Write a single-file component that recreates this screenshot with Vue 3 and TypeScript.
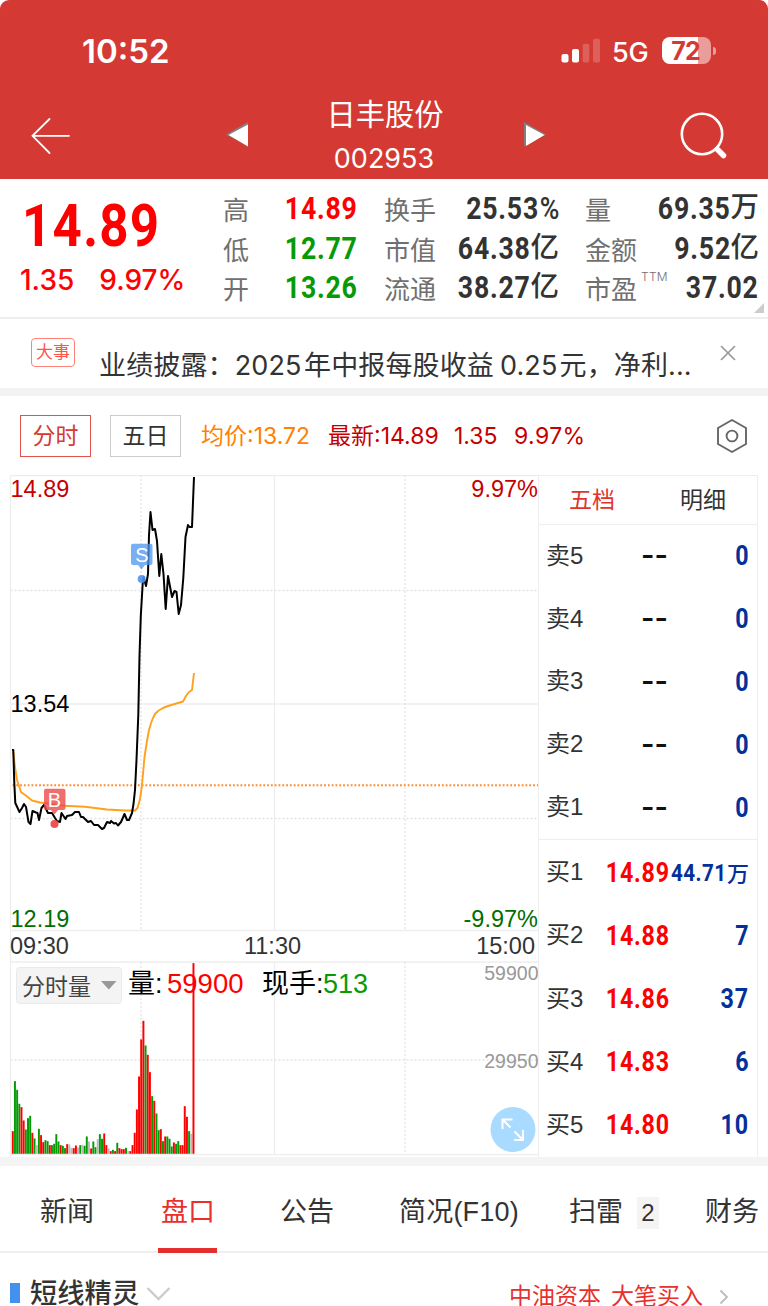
<script setup lang="ts">
interface Metric { label: string; value: string; unit?: string; pct?: boolean; tone?: 'rise' | 'fall'; sup?: string }
interface Level { label: string; price: string; volume: string; unit?: string }
interface Bar { x: number; y: number; height: number; fill: string }

const metricRows: Metric[][] = [
  [
    { label: '高', value: '14.89', tone: 'rise' },
    { label: '换手', value: '25.53', pct: true },
    { label: '量', value: '69.35', unit: '万' },
  ],
  [
    { label: '低', value: '12.77', tone: 'fall' },
    { label: '市值', value: '64.38', unit: '亿' },
    { label: '金额', value: '9.52', unit: '亿' },
  ],
  [
    { label: '开', value: '13.26', tone: 'fall' },
    { label: '流通', value: '38.27', unit: '亿' },
    { label: '市盈', value: '37.02', sup: 'TTM' },
  ],
]

const asks: Level[] = ['5', '4', '3', '2', '1'].map((n) => ({ label: '卖' + n, price: '--', volume: '0' }))
const bids: Level[] = [
  { label: '买1', price: '14.89', volume: '44.71', unit: '万' },
  { label: '买2', price: '14.88', volume: '7' },
  { label: '买3', price: '14.86', volume: '37' },
  { label: '买4', price: '14.83', volume: '6' },
  { label: '买5', price: '14.80', volume: '10' },
]

// Chart coordinates start at the top of the price pane.
const priceLine =
  '12,275 13.3,275 13.6,285 14.3,308 15.3,328 19.5,337 22,333 24,329 26,332 28.5,347 30.5,349 32.5,336 36,337.5 37.5,338 39,345 41.5,333 44,330 48,338 52,338 55,343 57,346 60,347 61.5,338 65.5,344 67,341 72,340 75,337 79,337 81,342 83,342 88,347 91,346 94,350 98,350 102,354 104,353 107,347 110,348 111,346 114,348.5 116,348 118,350.5 121,347 124.5,339 127,345 129,345 132,338 133.5,329 135,315 136.5,285 138.3,240 139.5,181 140.8,141 142.6,110 143.5,102 146,111 148,99 149,60 150.5,37 152.5,55 155,54 157,66 159.3,101 161.3,79 163.5,99 165.7,134 168,101 172,122 174.5,116 176.5,117 178.7,139 181,130 183.3,103 185.5,62 188,50 189.5,52 192,52 194,2'
const averageLine =
  '13.3,277 15,292 17,305 21,317 26.5,321 32,325.5 40,327.5 55,329.5 65,330.7 85,331.7 95,333 107,334.5 125,335.5 135,335.5 137.5,333 140,324 142,310 144.5,282 147,266 149,255 151,248 153,243 155,239 158,236 163,233 168,231 178,228 183,226.5 186,221 189,217 192,215 194,198'

const volumes =
  '68r 218g 192g 150g 140r 100r 73g 107g 114g 63r 46g 26n 75g 56r 35r 41g 38g 26r 26g 30g 59g 37g 26r 24g 17g 29r 28n 18n 17r 25r 19n 26g 27n 24g 52g 37n 16r 37g 20g 44n 59g 45g 61r 26r 16n 8r 12g 8r 33g 17r 14r 14r 18g 8n 8r 26r 63r 133r 232r 343r 399r 325g 297r 245r 173g 159r 121g 71g 74r 38g 52r 52g 45g 22g 34r 30g 38g 26r 26r 143r 111r 68g 60n 572r'
const tones: Record<string, string> = { r: '#ff0000', g: '#069a06', n: '#bbbbbb' }
const bars: Bar[] = volumes.split(' ').map((item, i) => {
  const height = parseInt(item, 10) / 3
  return { x: 11.8 + i * 2.177, y: 678.8 - height, height, fill: tones[item.slice(-1)] }
})

const tabs = [
  { label: '新闻', cls: 't1' },
  { label: '盘口', cls: 't2 on' },
  { label: '公告', cls: 't3' },
  { label: '简况(F10)', cls: 't4' },
  { label: '扫雷', cls: 't5', count: '2' },
  { label: '财务', cls: 't6' },
]
</script>

<template>
  <div class="screen">
    <header class="head">
      <div class="status">
        <span class="clock">10:52</span>
        <svg class="signal" width="40" height="26" viewBox="0 0 40 26">
          <g fill="#fff">
            <rect x="0.5" y="16" width="7" height="8.5" rx="2" />
            <rect x="11" y="11" width="7" height="13.5" rx="2" />
            <rect x="21.7" y="5.7" width="6.6" height="18.8" rx="2" opacity=".2" />
            <rect x="32" y="0.8" width="7" height="23.7" rx="2" opacity=".2" />
          </g>
        </svg>
        <span class="net">5G</span>
        <span class="battery"><span class="level">72</span></span>
        <span class="nub"></span>
      </div>
      <div class="titlebar">
        <svg class="back" width="42" height="38" viewBox="0 0 42 38" fill="none" stroke="#fff" stroke-width="1.8" stroke-linecap="round">
          <path d="M19.500 2 2.500 18.800 19.500 36M2.500 18.800H39" />
        </svg>
        <svg class="prev" width="24" height="26" viewBox="0 0 24 26">
          <path d="M0 12.500 22 0V24Z" fill="#808080" /><path d="M2.500 13 22 2.500V24.500Z" fill="#fff" />
        </svg>
        <div class="names"><span class="stock">日丰股份</span><span class="code">002953</span></div>
        <svg class="next" width="24" height="26" viewBox="0 0 24 26">
          <path d="M1 0 23 12.500 1 24.500Z" fill="#808080" /><path d="M3 3 21.500 13 3 24Z" fill="#fff" />
        </svg>
        <svg class="search" width="48" height="48" viewBox="0 0 48 48" fill="none" stroke="#fff">
          <circle cx="22" cy="22" r="20.200" stroke-width="2.600" />
          <path d="m35.500 35.500 3 3" stroke-width="4" /><path d="m38 38 5.500 5.500" stroke-width="5.500" stroke-linecap="round" />
        </svg>
      </div>
    </header>

    <section class="quote">
      <div class="now">
        <div class="last">14.89</div>
        <div class="change"><span>1.35</span><span>9.97%</span></div>
      </div>
      <div class="metrics">
        <div v-for="(row, r) in metricRows" :key="r" class="metric-row">
          <div v-for="m in row" :key="m.label" class="metric">
            <span class="mlabel">{{ m.label }}<sup v-if="m.sup">{{ m.sup }}</sup></span>
            <span class="mvalue" :class="m.tone"><span class="num">{{ m.value }}<i v-if="m.pct">%</i></span><i v-if="m.unit" class="unit">{{ m.unit }}</i></span>
          </div>
        </div>
      </div>
      <span class="corner"></span>
    </section>

    <section class="event">
      <span class="tag">大事</span>
      <p>业绩披露：<b class="year">2025</b>年中报每股收益<b class="eps">0.25</b>元，净利<b>...</b></p>
      <svg width="18" height="18" viewBox="0 0 18 18" stroke="#999" stroke-width="1.700"><path d="M2 2 16 16M16 2 2 16" /></svg>
    </section>

    <nav class="modes">
      <span class="mode on">分时</span>
      <span class="mode">五日</span>
      <span class="avg">均价<b>:13.72</b></span>
      <span class="new">最新<b>:14.89</b></span>
      <span class="diff">1.35</span>
      <span class="rate">9.97%</span>
      <svg width="34" height="36" viewBox="0 0 34 36" fill="none" stroke="#666" stroke-width="1.900">
        <path d="M17 2 31 10V26L17 34 3 26V10Z" stroke-linejoin="round" /><circle cx="17" cy="18" r="5.400" />
      </svg>
    </nav>

    <main class="market">
      <svg class="chart" width="538" height="682" viewBox="0 0 538 682">
        <g fill="none" stroke="#eeeeee" stroke-width="1.3">
          <path d="M10.5 682V.7H538M10.5 229H538M10.5 455.5H538M10.5 487H538M10.5 679.7H538M274.5 0V455.5M274.5 487V680" />
          <path d="M10.5 115.5H538M10.5 343.5H538M10.5 585H538M141 0V455.5M405 0V455.5M141 487V680M405 487V680" stroke="#e4e4e4" stroke-dasharray="2 2" />
        </g>
        <path d="M12.5 310.2H538" stroke="#ff8a2b" stroke-width="2" stroke-dasharray="1.8 2" />
        <polyline :points="averageLine" fill="none" stroke="#ffa11c" stroke-width="1.9" stroke-linejoin="round" />
        <polyline :points="priceLine" fill="none" stroke="#000" stroke-width="2" stroke-linejoin="round" />
        <g fill="#4c95f0">
          <circle cx="141.7" cy="104" r="4" opacity=".9" />
          <path d="M133 68.7h17.5a2 2 0 0 1 2 2V88a2 2 0 0 1-2 2H145l-3.5 4.5L138 90h-5a2 2 0 0 1-2-2V70.7a2 2 0 0 1 2-2Z" opacity=".75" />
        </g>
        <g fill="#ec4a4a">
          <circle cx="54.5" cy="349" r="4" opacity=".95" />
          <path d="M46 313.7h17.5a2 2 0 0 1 2 2V333a2 2 0 0 1-2 2H58l-3.5 4.5L51 335h-5a2 2 0 0 1-2-2V315.700a2 2 0 0 1 2-2Z" opacity=".8" />
        </g>
        <g fill="#fff" font-size="20" text-anchor="middle"><text x="141.8" y="87">S</text><text x="54.5" y="332">B</text></g>
        <g font-size="23.5">
          <text x="10.5" y="22" fill="#c40000">14.89</text>
          <text x="538" y="22" fill="#c40000" text-anchor="end">9.97%</text>
          <text x="10.5" y="237">13.54</text>
          <text x="10.5" y="451.5" fill="#006e00">12.19</text>
          <text x="538" y="451.5" fill="#006e00" text-anchor="end">-9.97%</text>
          <g fill="#333"><text x="10" y="479">09:30</text><text x="272.5" y="479" text-anchor="middle">11:30</text><text x="535" y="479" text-anchor="end">15:00</text></g>
        </g>
        <g font-size="19.5" fill="#999" text-anchor="end"><text x="538.5" y="505">59900</text><text x="538.5" y="593">29950</text></g>
        <rect v-for="(b, i) in bars" :key="i" :x="b.x" :y="b.y" :width="1.95" :height="b.height" :fill="b.fill" />
        <rect x="16.5" y="492.5" width="105" height="36" rx="3" fill="#f4f4f4" stroke="#eaeaea" />
        <text x="22" y="520" font-size="23" fill="#444">分时量</text>
        <path d="M101 506h15.500l-7.700 8.500Z" fill="#999" />
        <g font-size="27">
          <text x="128" y="518">量:</text><text x="167" y="518" font-size="27.500" fill="#ff0000">59900</text>
          <text x="262" y="518">现手:</text><text x="323" y="518" fill="#069a06">513</text>
        </g>
        <circle cx="513" cy="654.500" r="22.500" fill="#a8dbff" />
        <path d="M502.500 654V644.500H512.500M503 645 510.500 652.500M514.500 656.500 522.500 664.500M514 665H523V655" fill="none" stroke="#fff" stroke-width="2" />
      </svg>
      <aside class="book">
        <div class="book-tabs"><span class="on">五档</span><span>明细</span></div>
        <div class="side asks">
          <div v-for="l in asks" :key="l.label" class="level-row"><span>{{ l.label }}</span><em>{{ l.price }}</em><strong><u>{{ l.volume }}</u></strong></div>
        </div>
        <div class="side bids">
          <div v-for="l in bids" :key="l.label" class="level-row">
            <span>{{ l.label }}</span><b>{{ l.price }}</b><strong :class="{ small: l.unit }"><u>{{ l.volume }}</u><i v-if="l.unit">{{ l.unit }}</i></strong>
          </div>
        </div>
      </aside>
    </main>

    <nav class="tabs">
      <span v-for="t in tabs" :key="t.label" :class="t.cls">{{ t.label }}<small v-if="t.count">{{ t.count }}</small></span>
    </nav>

    <footer class="alerts">
      <span class="mark"></span>
      <h2>短线精灵</h2>
      <svg class="expand" width="26" height="16" viewBox="0 0 26 16" fill="none" stroke="#ccc" stroke-width="2.400"><path d="M1.500 2 12.500 13 23.500 2" /></svg>
      <span class="tip">中油资本</span><span class="tip second">大笔买入</span>
      <svg class="more" width="10" height="16" viewBox="0 0 10 16" fill="none" stroke="#bbb" stroke-width="1.800"><path d="M1.500 1.500 8 8 1.500 14.500" /></svg>
    </footer>
  </div>
</template>

<style>
body { margin: 0; background: #fff; }
</style>

<style scoped>
.screen { width: 768px; height: 1306px; overflow: hidden; background: #fff; font-family: "Liberation Sans", "Noto Sans CJK SC", sans-serif; color: #333; }
.screen * { box-sizing: border-box; }
i, em { font-style: normal; }
svg { display: block; flex: none; }
span, p, h2, strong { white-space: nowrap; }

.head { height: 179px; background: #d43a33; border-radius: 9px 9px 0 0; color: #fff; font-family: Inter, "Noto Sans CJK SC", sans-serif; }
.status { height: 80px; padding: 38px 0 0 82px; display: flex; }
.clock { width: 479px; font-size: 33px; line-height: 27px; font-weight: 600; }
.net { width: 61px; padding-left: 11px; font-size: 27px; line-height: 29px; font-weight: 500; letter-spacing: -.3px; }
.battery { width: 49px; height: 27px; margin-top: -1px; border-radius: 8px; background: linear-gradient(90deg, #fff 36px, rgba(255, 255, 255, .5) 36px); }
.level { display: block; padding-right: 2px; text-align: center; font-size: 25px; line-height: 29px; font-weight: 700; color: #d43a33; letter-spacing: -1px; }
.nub { width: 3px; height: 8px; margin: 9px 0 0 2px; border-radius: 0 4px 4px 0; background: rgba(255, 255, 255, .5); }
.titlebar { display: flex; height: 99px; }
.back { margin: 37px 0 0 30px; }
.prev { margin: 42px 0 0 154px; }
.names { width: 270px; display: flex; flex-direction: column; align-items: center; padding: 14px 0 0; }
.stock { font-size: 29.300px; line-height: 42px; }
.code { padding-right: 2px; font-size: 27px; line-height: 46px; font-weight: 400; }
.next { margin: 42px 0 0 3px; }
.search { margin: 32px 0 0 133px; }

.quote { position: relative; display: flex; height: 140px; border-bottom: 2px solid #eee; }
.now { width: 224px; color: #f00; }
.last { padding: 17px 0 0; margin-left: 22px; font: 700 59px/60px Roboto, sans-serif; letter-spacing: 1.500px; transform: scaleX(.865); transform-origin: 0 0; }
.change { display: flex; gap: 25px; padding-left: 20px; font: 500 28px/48px Inter, sans-serif; }
.metrics { padding-top: 9px; }
.metric-row { display: grid; grid-template-columns: 135px 175px 174px; column-gap: 26px; height: 39.500px; margin-left: -1px; }
.metric { display: flex; justify-content: space-between; }
.mlabel { font-size: 26px; line-height: 47px; color: #707070; }
.mlabel sup { display: inline-block; margin-left: 4px; font: 300 12px/12px Inter, sans-serif; letter-spacing: .3px; vertical-align: 18px; }
.mvalue { display: flex; justify-content: flex-end; min-width: 0; }
.num { font: 700 31px/41px Roboto, sans-serif; letter-spacing: .9px; transform: scaleX(.86); transform-origin: 100% 0; }
.num i { margin-left: 1px; font-weight: 500; letter-spacing: 0; }
.unit { font-size: 28.500px; font-weight: 500; line-height: 39px; }
.rise { color: #f00; }
.fall { color: #069a06; }
.corner { position: absolute; right: 4px; bottom: 4px; border-left: 10px solid transparent; border-bottom: 10px solid #ccc; }

.event { display: flex; height: 69px; }
.tag { width: 44px; height: 29px; margin: 19px 0 0 31px; border: 1.500px solid #ff8279; border-radius: 4px; font-size: 17px; line-height: 27px; text-align: center; color: #ff5348; }
.event p { width: 620px; margin: 24px 0 0 24px; font-size: 27px; line-height: 46px; font-family: Inter, "Noto Sans CJK SC", sans-serif; letter-spacing: .13px; }
.event b { font-weight: 400; }
.event .year { margin-right: 2.500px; }
.eps { margin: 0 2px 0 6px; }
.event svg { margin-top: 25px; }

.modes { display: flex; height: 87px; padding: 19px 0 0 20px; border-top: 8px solid #f3f3f3; font-size: 23px; line-height: 42px; font-family: Inter, "Noto Sans CJK SC", sans-serif; color: #c40000; }
.modes b { font-weight: 400; }
.mode { width: 71px; height: 42px; margin-right: 19px; border: 1px solid #ccc; line-height: 41px; text-align: center; color: #333; }
.mode.on { border-color: #e0524b; color: #d43a33; }
.avg { width: 127px; margin-left: 1px; color: #ff8100; }
.new { width: 126px; }
.diff { width: 60px; }
.rate { width: 201px; letter-spacing: .4px; }
.modes svg { margin-top: 3px; }

.market { display: flex; height: 682px; }
.book { width: 220px; border: 1px solid #eee; border-bottom: 0; }
.book-tabs { display: flex; height: 49px; padding-left: 30px; border-bottom: 1px solid #eee; font-size: 23px; line-height: 49px; }
.book-tabs span { flex: none; width: 111px; }
.book-tabs .on { color: #e0352d; }
.side { display: flex; flex-direction: column; }
.asks { height: 315px; border-bottom: 1px solid #eee; }
.bids { height: 317px; padding-top: 1px; }
.level-row { flex: 1; display: grid; grid-template-columns: 59px 63px 81px; align-items: center; padding-left: 7px; }
.level-row span { font-size: 24px; line-height: 30px; margin-top: -1px; }
.level-row em { font: 600 29px/30px Inter, sans-serif; color: #111; padding-left: 36px; margin-top: -2px; }
.level-row b { padding-left: 1px; font: 700 27px/32px Roboto, sans-serif; letter-spacing: .9px; color: #f00; transform: scaleX(.86); transform-origin: 0 0; }
.level-row strong { justify-self: end; display: flex; justify-content: flex-end; font: 700 27px/32px Roboto, sans-serif; color: #03309a; }
.level-row u { text-decoration: none; letter-spacing: .9px; transform: scaleX(.86); transform-origin: 100% 0; }
.level-row .small { font-size: 24px; }
.small u { letter-spacing: .5px; }
.small i { font: 500 22px/30px "Noto Sans CJK SC", sans-serif; }

.tabs { display: flex; height: 96px; border-top: 9px solid #f4f4f4; border-bottom: 2px solid #f0f0f0; font-size: 27px; line-height: 92px; }
.tabs span { flex: none; height: 87px; }
.t1 { width: 118px; margin-left: 40px; }
.t2 { width: 59px; padding-left: 3px; }
.tabs .on { color: #e8302d; border-bottom: 5px solid #e52e2e; }
.t3 { margin-left: 63px; width: 119px; }
.t4 { width: 170px; letter-spacing: .2px; }
.t5 { width: 136px; }
.tabs small { display: inline-block; width: 22px; height: 32px; margin-left: 14px; background: #f4f4f4; font-size: 24px; line-height: 32px; text-align: center; }

.alerts { display: flex; height: 54px; }
.mark { width: 10px; height: 20px; margin: 30px 0 0 10px; background: #4490ef; }
.alerts h2 { width: 116px; height: 27px; margin: 27px 0 0 10px; font-size: 27.300px; line-height: 28px; font-weight: 500; }
.expand { margin-top: 33px; }
.tip { width: 92px; height: 22px; margin: 32px 0 0 337px; font-size: 23px; line-height: 22px; color: #e8302d; }
.tip.second { margin-left: 10px; }
.more { margin: 36px 0 0 16px; }
</style>
